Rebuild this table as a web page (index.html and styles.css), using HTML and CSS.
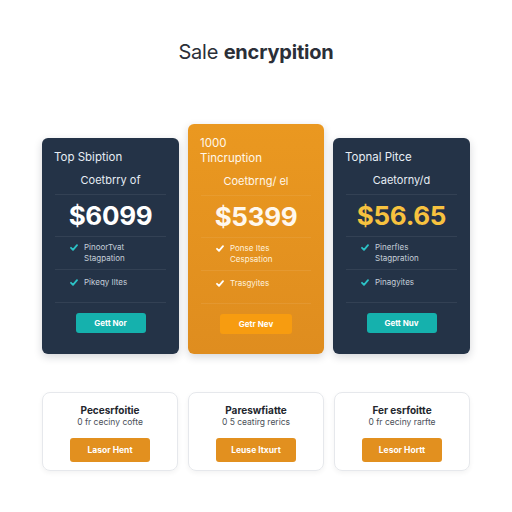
FILE: index.html
```html
<!DOCTYPE html>
<html>
<head>
<meta charset="utf-8">
<link rel="stylesheet" href="styles.css">
</head>
<body>
<main class="page">
  <h1 class="heading">Sale <b>encrypition</b></h1>

  <section class="plans">
    <div class="plan plan-dark">
      <div class="plan-title">Top Sbiption</div>
      <div class="plan-sub">Coetbrry of</div>
      <div class="plan-price">$6099</div>
      <div class="feature feature-two"><svg class="check" viewBox="0 0 8 7"><path d="M1 3.8 L3 5.8 L7 1.2"/></svg><span>PinoorTvat<br>Stagpation</span></div>
      <div class="feature feature-one"><svg class="check" viewBox="0 0 8 7"><path d="M1 3.8 L3 5.8 L7 1.2"/></svg><span>Pikeqy Iltes</span></div>
      <div class="plan-action"><span class="btn btn-teal">Gett Nor</span></div>
    </div>

    <div class="plan plan-orange">
      <div class="plan-title">1000<br>Tincruption</div>
      <div class="plan-sub">Coetbrng/ el</div>
      <div class="plan-price">$5399</div>
      <div class="feature feature-two"><svg class="check" viewBox="0 0 8 7"><path d="M1 3.8 L3 5.8 L7 1.2"/></svg><span>Ponse Ites<br>Cespsation</span></div>
      <div class="feature feature-one"><svg class="check" viewBox="0 0 8 7"><path d="M1 3.8 L3 5.8 L7 1.2"/></svg><span>Trasgyites</span></div>
      <div class="plan-action"><span class="btn btn-orange">Getr Nev</span></div>
    </div>

    <div class="plan plan-dark">
      <div class="plan-title">Topnal Pitce</div>
      <div class="plan-sub">Caetorny/d</div>
      <div class="plan-price price-gold">$56.65</div>
      <div class="feature feature-two"><svg class="check" viewBox="0 0 8 7"><path d="M1 3.8 L3 5.8 L7 1.2"/></svg><span>Pinerfles<br>Stagpration</span></div>
      <div class="feature feature-one"><svg class="check" viewBox="0 0 8 7"><path d="M1 3.8 L3 5.8 L7 1.2"/></svg><span>Pinagyites</span></div>
      <div class="plan-action"><span class="btn btn-teal">Gett Nuv</span></div>
    </div>
  </section>

  <section class="extras">
    <div class="extra">
      <div class="extra-title">Pecesrfoitie</div>
      <div class="extra-sub">0 fr ceciny cofte</div>
      <span class="btn-soft">Lasor Hent</span>
    </div>
    <div class="extra">
      <div class="extra-title">Pareswfiatte</div>
      <div class="extra-sub">0 5 ceatirg rerics</div>
      <span class="btn-soft">Leuse Itxurt</span>
    </div>
    <div class="extra">
      <div class="extra-title">Fer esrfoitte</div>
      <div class="extra-sub">0 fr ceciny rarfte</div>
      <span class="btn-soft">Lesor Hortt</span>
    </div>
  </section>
</main>
</body>
</html>
```

FILE: styles.css
```css
* { box-sizing: border-box; }
html, body {
  margin: 0;
  padding: 0;
  background: #ffffff;
}
body {
  font-family: Inter, "Open Sans", "Liberation Sans", sans-serif;
  width: 512px;
  height: 512px;
  overflow: hidden;
}
.page {
  display: flex;
  flex-direction: column;
  align-items: center;
  padding-top: 40px;
}
.heading {
  margin: 0;
  font-size: 20px;
  line-height: 24px;
  font-weight: 400;
  color: #2b2f38;
  letter-spacing: -0.2px;
}
.heading b { font-weight: 700; }

.plans {
  display: flex;
  align-items: flex-end;
  gap: 9px;
  margin-top: 60px;
}
.plan {
  width: 137px;
  height: 216px;
  border-radius: 6px;
  padding: 12px 13px 0;
  display: flex;
  flex-direction: column;
  box-shadow: 0 3px 8px rgba(20, 30, 45, 0.18);
}
.plan-dark {
  background: #243347;
  color: #e6edf4;
}
.plan-orange {
  width: 136px;
  height: 230px;
  background: linear-gradient(180deg, #ea9820 0%, #df8d1f 100%);
  color: #fff7ea;
}
.plan-title {
  font-size: 11.5px;
  line-height: 15px;
  margin-left: -1px;
}
.plan-sub {
  text-align: center;
  font-size: 11px;
  line-height: 15px;
  margin-top: 8px;
  padding-bottom: 6px;
  border-bottom: 1px solid rgba(255, 255, 255, 0.07);
}
.plan-price {
  height: 42px;
  display: flex;
  align-items: center;
  justify-content: center;
  font-size: 26px;
  font-weight: 700;
  color: #ffffff;
  border-bottom: 1px solid rgba(255, 255, 255, 0.07);
  letter-spacing: -0.3px;
}
.plan-orange .plan-price { color: #fff8ee; }
.price-gold { color: #f7c23f; }
.feature {
  height: 33px;
  display: flex;
  align-items: center;
  gap: 6px;
  padding-left: 15px;
  font-size: 8px;
  line-height: 11px;
  color: #c5cfd9;
  border-bottom: 1px solid rgba(255, 255, 255, 0.07);
}
.feature-one { padding-bottom: 7px; }
.plan-orange .feature {
  color: #fff1dc;
  border-bottom-color: rgba(255, 255, 255, 0.08);
}
.check {
  width: 8px;
  height: 7px;
  flex: none;
  fill: none;
  stroke: #2cc3c7;
  stroke-width: 1.8;
  stroke-linecap: round;
  stroke-linejoin: round;
}
.feature-two .check {
  align-self: flex-start;
  margin-top: 7px;
}
.plan-orange .check { stroke: #ffffff; }
.plan-action {
  display: flex;
  justify-content: center;
  margin-top: 10px;
}
.btn {
  width: 70px;
  height: 20px;
  border-radius: 3px;
  display: flex;
  align-items: center;
  justify-content: center;
  font-size: 8px;
  font-weight: 700;
  color: #ffffff;
}
.btn-teal { background: #15b1ad; }
.btn-orange { width: 72px; background: #f79c10; }

.extras {
  display: flex;
  gap: 10px;
  margin-top: 38px;
}
.extra {
  width: 136px;
  height: 79px;
  border: 1px solid #e6e8ec;
  border-radius: 8px;
  box-shadow: 0 2px 5px rgba(0, 0, 0, 0.05);
  display: flex;
  flex-direction: column;
  align-items: center;
  padding-top: 11px;
}
.extra-title {
  font-size: 10px;
  line-height: 13px;
  font-weight: 700;
  color: #23262d;
}
.extra-sub {
  font-size: 8.5px;
  line-height: 11px;
  color: #4a4f58;
}
.btn-soft {
  margin-top: 10px;
  width: 80px;
  height: 24px;
  border-radius: 3px;
  background: #e2901f;
  color: #ffffff;
  font-size: 8.5px;
  font-weight: 700;
  display: flex;
  align-items: center;
  justify-content: center;
}
```
